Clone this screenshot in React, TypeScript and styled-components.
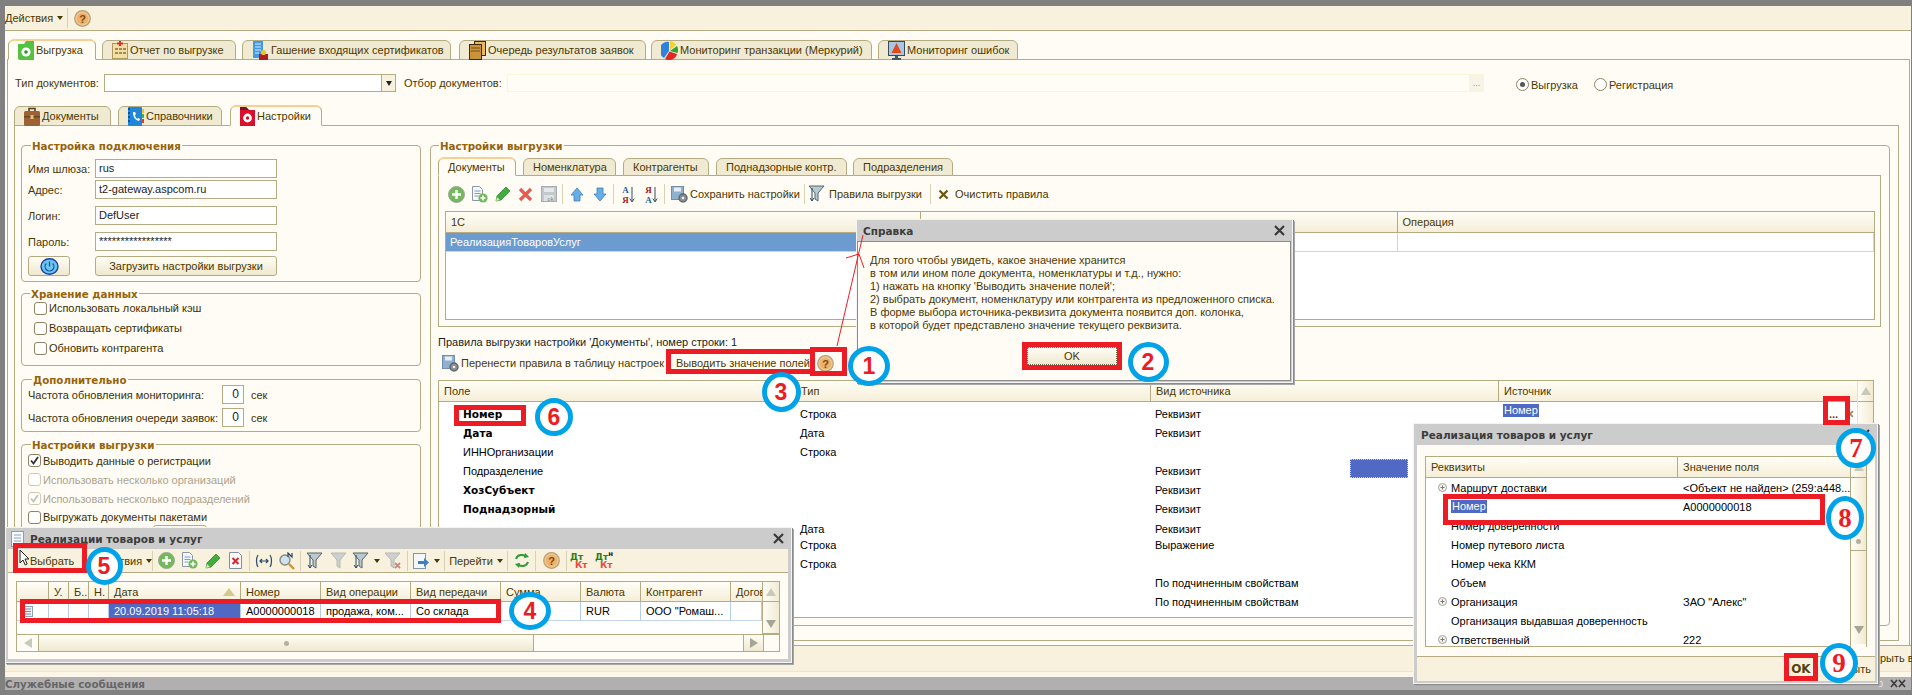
import React from 'react'
import styled, { createGlobalStyle } from 'styled-components'

const line = '#b5ab82'
const beige = '#f7f1de'
const page = '#fffcf6'
const ink = '#4a3800'
const pick = '#5069c5'

const Global = createGlobalStyle`
	html, body { margin: 0; padding: 0; background: #808080; }
	* { box-sizing: border-box; }
	svg { flex: none; }
	body { font-family: "Liberation Sans", Arial, sans-serif; font-size: 11px; color: ${ink}; }
`

/* ---------- icons ---------- */

const Help = () => (
	<svg width="17" height="17" viewBox="0 0 17 17">
		<circle cx="8.5" cy="8.5" r="7.8" fill="#f2c48a" stroke="#b5a27c" strokeWidth="1.2"/>
		<circle cx="8.5" cy="8.5" r="5.6" fill="#eeb06a"/>
		<text x="8.5" y="12.6" textAnchor="middle" fontSize="11" fontWeight="700" fontFamily="Liberation Sans" fill="#7a4a10">?</text>
	</svg>
)
const GreenFolder = () => (
	<svg width="16" height="19" viewBox="0 0 16 19">
		<path d="M0 3h6l2-3h8v19H2a2 2 0 0 1-2-2z" fill="#53c240"/>
		<circle cx="8" cy="11" r="4.6" fill="#fff"/><circle cx="8" cy="11" r="1.8" fill="#2f8f2a"/>
	</svg>
)
const Report = () => (
	<svg width="16" height="18" viewBox="0 0 16 18">
		<rect x=".5" y="2.5" width="15" height="15" fill="#f3dfa6" stroke="#b09a5c"/>
		<path d="M3 7h3v2H3zM7 7h3v2H7zM11 7h3v2h-3zM3 11h3v2H3zM7 11h3v2H7zM11 11h3v2h-3z" fill="#a08a50"/>
		<path d="M7 0h2v5H7zM5 1.5h6v2H5z" fill="#d9322c"/>
	</svg>
)
const Cert = () => (
	<svg width="17" height="19" viewBox="0 0 17 19">
		<rect x="1" y="0" width="10" height="17" fill="#3f9be8"/>
		<path d="M3 3h6M3 6h6M3 9h6M3 12h4" stroke="#d5ecff"/>
		<rect x="7" y="13" width="9" height="6" fill="#b01c1c"/>
		<rect x="9" y="9" width="5" height="5" rx="2" fill="#e5c62e"/>
	</svg>
)
const Queue = () => (
	<svg width="17" height="19" viewBox="0 0 17 19">
		<rect x="5.5" y=".5" width="11" height="14" fill="#e8b85c" stroke="#3c2a08"/>
		<rect x=".5" y="3.5" width="12" height="15" fill="#c9933c" stroke="#3c2a08"/>
		<path d="M2 7h9M2 10h9" stroke="#7a5518"/>
	</svg>
)
const Pie = () => (
	<svg width="17" height="19" viewBox="0 0 17 19">
		<path d="M8 10 L8 1 A8 8.5 0 0 0 3 17z" fill="#2f82dc"/>
		<path d="M9 9V0a8 8 0 0 1 6 4z" fill="#f3d42c"/>
		<path d="M9 10l7-5a8 8 0 0 1 .5 7z" fill="#2fa52f"/>
		<path d="M8.5 10.5l7.5 2.5A8 8 0 0 1 4 18z" fill="#e32626"/>
	</svg>
)
const Monitor = () => (
	<svg width="17" height="19" viewBox="0 0 17 19">
		<rect x=".5" y=".5" width="16" height="14" fill="#a9c7e2" stroke="#3b4a58"/>
		<path d="M8.5 2l5 10h-10z" fill="#e24a1c"/>
		<path d="M7 15h3v2H7zM4 17h9v2H4z" fill="#4a5560"/>
	</svg>
)
const Briefcase = () => (
	<svg width="16" height="19" viewBox="0 0 16 19">
		<path d="M5 4V1.5h6V4" fill="none" stroke="#5c3a1a" strokeWidth="1.6"/>
		<rect x="0" y="4" width="16" height="15" rx="1.5" fill="#9c6236"/>
		<rect x="0" y="9" width="16" height="1.5" fill="#6e4322"/>
		<rect x="6.5" y="8" width="3" height="4" fill="#e8c078"/>
	</svg>
)
const PhoneBook = () => (
	<svg width="16" height="19" viewBox="0 0 16 19">
		<rect x="0" y="0" width="14" height="19" rx="1" fill="#1f86dc"/>
		<path d="M0 2h2M0 6h2M0 10h2M0 14h2" stroke="#0b3f78" strokeWidth="1.5"/>
		<path d="M5 5c0 5 2 8 6 9l1-2-2-1-1 1c-1-1-2-3-2-4l1-1-1-2z" fill="#fff"/>
		<path d="M14 2h2v4h-2z" fill="#e8c62a"/><path d="M14 7h2v4h-2z" fill="#3fb04a"/><path d="M14 12h2v4h-2z" fill="#e23a2a"/>
	</svg>
)
const RedFolder = () => (
	<svg width="15" height="19" viewBox="0 0 15 19">
		<path d="M0 0h6l3 3h6v16H0z" fill="#d8102c"/>
		<path d="M0 0h6l3 3H0z" fill="#7a1020"/>
		<circle cx="7.5" cy="11" r="4.4" fill="#fff"/><circle cx="7.5" cy="11" r="1.7" fill="#d8102c"/>
	</svg>
)
const Add = () => (
	<svg width="17" height="17" viewBox="0 0 17 17">
		<circle cx="8.5" cy="8.5" r="8" fill="#74b85e" stroke="#9aa894"/>
		<path d="M8.5 4v9M4 8.5h9" stroke="#fff" strokeWidth="2.4"/>
	</svg>
)
const CopyDoc = () => (
	<svg width="17" height="17" viewBox="0 0 17 17">
		<path d="M1.5.5h7l3 3v11h-10z" fill="#f4f8fb" stroke="#8a98a6"/>
		<path d="M3.5 5h6M3.5 7.5h6M3.5 10h4" stroke="#7f9cc0"/>
		<circle cx="12" cy="12" r="4.6" fill="#74b85e"/>
		<path d="M12 9.5v5M9.5 12h5" stroke="#fff" strokeWidth="1.6"/>
	</svg>
)
const Pencil = () => (
	<svg width="16" height="16" viewBox="0 0 16 16">
		<path d="M1 15l1-5L11 1l4 4-9 9z" fill="#3fae3a" stroke="#2a7a28" strokeWidth=".7"/>
		<path d="M1 15l1-4 3 3z" fill="#d8e8b0"/>
	</svg>
)
const RedCross = () => (
	<svg width="15" height="15" viewBox="0 0 15 15">
		<path d="M2 2l11 11M13 2L2 13" stroke="#ea5a50" strokeWidth="3.2"/>
	</svg>
)
const DocCross = () => (
	<svg width="15" height="17" viewBox="0 0 15 17">
		<path d="M1.5.5h9l3 3v13h-12z" fill="#f8fafc" stroke="#7f8fa0"/>
		<path d="M4.5 6l6 6M10.5 6l-6 6" stroke="#d8262a" strokeWidth="2"/>
	</svg>
)
const Floppy = () => (
	<svg width="16" height="16" viewBox="0 0 16 16">
		<rect x=".5" y=".5" width="15" height="15" fill="#c3c8cc" stroke="#a7adb2"/>
		<rect x="3" y="2" width="10" height="4" fill="#e6e9eb"/>
		<rect x="3" y="9" width="10" height="6" fill="#dfe2e4"/>
		<text x="9.5" y="14.6" textAnchor="middle" fontSize="6" fontFamily="Liberation Sans" fill="#7a8288">ok</text>
	</svg>
)
const Arrow = ({ down }: { down?: boolean }) => (
	<svg width="14" height="15" viewBox="0 0 14 15">
		<path d={down ? 'M4 1h6v6h3l-6 7-6-7h3z' : 'M7 1l6 7h-3v6H4V8H1z'} fill="#66aee4" stroke="#3f7fb6" strokeWidth=".8"/>
	</svg>
)
const Sort = ({ flip }: { flip?: boolean }) => (
	<svg width="14" height="19" viewBox="0 0 14 19">
		<text x="4.5" y="8" textAnchor="middle" fontSize="9" fontFamily="Liberation Serif" fontWeight="700" fill={flip ? '#a0201c' : '#1c5c9c'}>{flip ? 'Я' : 'А'}</text>
		<text x="4.5" y="18" textAnchor="middle" fontSize="9" fontFamily="Liberation Serif" fontWeight="700" fill={flip ? '#1c5c9c' : '#a0201c'}>{flip ? 'А' : 'Я'}</text>
		<path d="M11 2v14M8.8 13.5L11 17l2.2-3.5" fill="none" stroke="#3c4a58"/>
	</svg>
)
const FloppyGear = () => (
	<svg width="17" height="17" viewBox="0 0 17 17">
		<rect x=".5" y=".5" width="12" height="13" fill="#8fb0d0" stroke="#6f8ea8"/>
		<rect x="3" y="1.5" width="7" height="4" fill="#e8eef4"/>
		<circle cx="12" cy="12" r="4" fill="#8a8f94" stroke="#60666c" strokeWidth="1.4"/>
		<circle cx="12" cy="12" r="1.3" fill="#eceff2"/>
	</svg>
)
const Funnel = ({ faded, cross }: { faded?: boolean, cross?: boolean }) => (
	<svg width="18" height="18" viewBox="0 0 18 18">
		<path d="M1 1h15l-6 7v8l-3-2V8z" fill={faded ? '#ccd0cc' : '#b9c9cf'} stroke={faded ? '#b6bab6' : '#56666e'}/>
		{!faded && <path d="M4 3v13M2 13l2 3 2-3" fill="none" stroke="#26465e"/>}
		{cross && <path d="M11 11l5 5M16 11l-5 5" stroke="#c98a80" strokeWidth="1.8"/>}
	</svg>
)
const BrownX = ({ faint }: { faint?: boolean }) => (
	<svg width={faint ? 8 : 11} height={faint ? 8 : 11} viewBox="0 0 11 11">
		<path d="M1.5 1.5l8 8M9.5 1.5l-8 8" stroke={faint ? '#9a8a50' : '#6b5510'} strokeWidth="2.2"/>
	</svg>
)
const Power = () => (
	<svg width="19" height="17" viewBox="0 0 19 17">
		<ellipse cx="9.5" cy="8.5" rx="8.5" ry="7.8" fill="#6cc4f2" stroke="#1c3fa8" strokeWidth="1.4"/>
		<path d="M6.3 5.5a4.4 4.4 0 1 0 6.4 0M9.5 3.5v5" fill="none" stroke="#0f5a96" strokeWidth="1.3"/>
	</svg>
)
const Close = () => (
	<svg width="11" height="11" viewBox="0 0 11 11">
		<path d="M1 1l9 9M10 1l-9 9" stroke="#3a3a3a" strokeWidth="2.2"/>
	</svg>
)
const DocSmall = () => (
	<svg width="13" height="16" viewBox="0 0 13 16">
		<rect x=".5" y=".5" width="12" height="15" fill="#f6f8fb" stroke="#8e9cab"/>
		<path d="M3 4h7M3 7h7M3 10h7" stroke="#93a6bc"/>
	</svg>
)
const RowDoc = () => (
	<svg width="11" height="11" viewBox="0 0 11 11">
		<rect x=".5" y=".5" width="10" height="10" fill="#eef2f8" stroke="#8ea0b8"/>
		<path d="M2 3h7M2 5.5h7M2 8h7" stroke="#7a8ea8"/>
	</svg>
)
const Pointer = () => (
	<svg width="11" height="17" viewBox="0 0 11 17">
		<path d="M1 1v13l3-3 2.2 5 2-1-2.2-5h4z" fill="#fff" stroke="#222"/>
	</svg>
)
const Expand = () => (
	<svg width="9" height="9" viewBox="0 0 9 9">
		<circle cx="4.5" cy="4.5" r="4" fill="#f4f2ea" stroke="#a0a0a0"/>
		<path d="M2.5 4.5h4M4.5 2.5v4" stroke="#777"/>
	</svg>
)
const Swap = () => (
	<svg width="18" height="14" viewBox="0 0 18 14">
		<path d="M3 1C1 4 1 10 3 13M15 1c2 3 2 9 0 12" fill="none" stroke="#2c4a68" strokeWidth="1.2"/>
		<path d="M5 7h8M7 5L5 7l2 2M11 5l2 2-2 2" fill="none" stroke="#2c4a68" strokeWidth="1.2"/>
	</svg>
)
const Find = () => (
	<svg width="18" height="18" viewBox="0 0 18 18">
		<circle cx="7" cy="8" r="5" fill="#cfe2f2" stroke="#8a8a7a" strokeWidth="1.4"/>
		<path d="M11 12l5 5" stroke="#c9963c" strokeWidth="2.4"/>
		<path d="M10 5V1l4 4V1" fill="none" stroke="#26465e" strokeWidth="1.2"/>
	</svg>
)
const Refresh = () => (
	<svg width="16" height="15" viewBox="0 0 16 15">
		<path d="M2 6a6 5.5 0 0 1 10.5-2M14 9a6 5.5 0 0 1-10.5 2" fill="none" stroke="#2f9a3a" strokeWidth="2"/>
		<path d="M11 0l4 4-5 1zM5 15l-4-4 5-1z" fill="#2f9a3a"/>
	</svg>
)
const SendIcon = () => (
	<svg width="17" height="16" viewBox="0 0 17 16">
		<rect x=".5" y=".5" width="12" height="15" fill="#f4f7fa" stroke="#8494a4"/>
		<path d="M5 8h6V5l5 4.5-5 4.5v-3H5z" fill="#3f7fc4"/>
	</svg>
)
const TrayMark = () => (
	<svg width="16" height="9" viewBox="0 0 16 9">
		<path d="M1 1l6 7M7 1L1 8M9 1l6 7M15 1L9 8" stroke="#3a3a3a" strokeWidth="1.6"/>
	</svg>
)

/* ---------- shell ---------- */

const Screen = styled.div`
	position: relative;
	width: 1912px;
	height: 695px;
	overflow: hidden;
	padding: 6px 1px 0 5px;
	background: #808080;
	display: flex;
	flex-direction: column;
`
const Toolbar = styled.div`
	flex: none;
	height: 25px;
	background: ${beige};
	border-bottom: 1px solid ${line};
	display: flex;
	align-items: center;
`
const Caret = styled.span`
	display: inline-block;
	margin-left: 4px;
	border: 3px solid transparent;
	border-top: 4px solid #4a3800;
	border-bottom: 0;
`
const TopMenu = styled.div`
	display: flex;
	align-items: center;
	width: 62px;
	height: 100%;
`
const Sep = styled.i<{ $h?: number, $m?: number }>`
	flex: none;
	width: 1px;
	height: ${p => p.$h ?? 20}px;
	margin: 0 ${p => p.$m ?? 2}px;
	background: #d8d1b4;
`
const Tool = styled.span<{ $w?: number, $start?: boolean, $pad?: number, $gap?: number }>`
	flex: none;
	display: inline-flex;
	align-items: center;
	justify-content: ${p => p.$start ? 'flex-start' : 'center'};
	width: ${p => p.$w ?? 23}px;
	padding-left: ${p => p.$pad ?? 0}px;
	gap: ${p => p.$gap ?? 0}px;
	white-space: nowrap;
`
const Work = styled.div`
	flex: none;
	height: 614px;
	padding: 8px 0 0 2px;
	background: ${page};
`
const Tabs = styled.div<{ $h: number, $mt?: number }>`
	display: flex;
	align-items: flex-end;
	height: ${p => p.$h}px;
	margin: ${p => p.$mt ?? 0}px 0 -1px 0;
	position: relative;
	z-index: 1;
`
const Tab = styled.div<{ $w: number, $on?: boolean, $ml?: number, $pad?: number }>`
	flex: none;
	width: ${p => p.$w}px;
	height: ${p => p.$on ? '100%' : 'calc(100% - 1px)'};
	margin-left: ${p => p.$ml ?? 0}px;
	padding-left: ${p => p.$pad ?? 9}px;
	display: flex;
	align-items: center;
	gap: 2px;
	white-space: nowrap;
	border: 1px solid ${line};
	border-radius: 6px 6px 0 0;
	background: ${p => p.$on ? page : '#f1ead3'};
	${p => p.$on ? `border-bottom-color: ${page}; border-top: 2px solid #f7cf92;` : `border-bottom-color: ${line};`}
`
const MainPanel = styled.div`
	height: 587px;
	width: 1903px;
	border: 1px solid ${line};
	padding: 14px 9px 4px 6px;
`
const FilterRow = styled.div`
	display: flex;
	align-items: center;
	height: 18px;
	margin-left: 1px;
`
const Label = styled.span<{ $w?: number, $ml?: number }>`
	flex: none;
	display: inline-block;
	width: ${p => p.$w ? `${p.$w}px` : 'auto'};
	margin-left: ${p => p.$ml ?? 0}px;
	white-space: nowrap;
`
const Combo = styled.div<{ $w: number, $soft?: boolean }>`
	flex: none;
	width: ${p => p.$w}px;
	height: 18px;
	display: flex;
	justify-content: flex-end;
	background: ${p => p.$soft ? '#fffdf5' : '#fff'};
	border: 1px solid ${p => p.$soft ? '#fbf6d8' : line};
`
const ComboBtn = styled.div<{ $soft?: boolean }>`
	width: 14px;
	display: grid;
	place-items: center;
	background: ${p => p.$soft ? '#f7f3e6' : beige};
	border-left: 1px solid ${p => p.$soft ? '#f7f3e6' : line};
	color: #9a9278;
	font-size: 9px;
	line-height: 8px;
`
const DownMark = styled.span`
	border: 3.5px solid transparent;
	border-top: 5px solid #222;
	border-bottom: 0;
`
const Radio = styled.span<{ $on?: boolean, $ml?: number }>`
	flex: none;
	width: 13px;
	height: 13px;
	margin: 3px 2px 0 ${p => p.$ml ?? 0}px;
	border: 1px solid #8c8462;
	border-radius: 50%;
	background: #fff;
	display: grid;
	place-items: center;
	&::after {
		content: '';
		width: 5px;
		height: 5px;
		border-radius: 50%;
		background: ${p => p.$on ? '#555' : 'transparent'};
	}
`
const RadioText = styled.span`
	margin-top: 3px;
	white-space: nowrap;
`
const SettingsPanel = styled.div`
	height: 516px;
	width: 1885px;
	border: 1px solid ${line};
	padding: 19px 8px 14px 6px;
	display: grid;
	grid-template-columns: 400px 1fr;
	column-gap: 9px;
`
const LeftCol = styled.div`
	display: flex;
	flex-direction: column;
`
const Group = styled.div<{ $h: number, $mt?: number }>`
	position: relative;
	flex: none;
	height: ${p => p.$h}px;
	margin-top: ${p => p.$mt ?? 0}px;
	border: 1px solid ${line};
	border-radius: 4px;
`
const Legend = styled.div<{ $x: number }>`
	position: absolute;
	top: -7px;
	left: ${p => p.$x}px;
	padding: 0 1px;
	background: ${page};
	font: 700 10.3px/14px "DejaVu Sans", sans-serif;
	color: #96640a;
	white-space: nowrap;
`
const FieldGrid = styled.div`
	padding: 13px 0 0 6px;
	display: grid;
	grid-template-columns: 67px 182px;
	row-gap: 2px;
	align-items: center;
`
const Field = styled.div<{ $mt?: number }>`
	height: 19px;
	margin-top: ${p => p.$mt ?? 0}px;
	padding-left: 3px;
	background: #fff;
	border: 1px solid ${line};
	line-height: 17px;
	color: #222;
	white-space: nowrap;
`
const FieldLabel = styled.div<{ $mt?: number }>`
	margin-top: ${p => p.$mt ?? 0}px;
	white-space: nowrap;
`
const Btn = styled.div<{ $w?: number, $mt?: number, $ml?: number }>`
	height: 20px;
	width: ${p => p.$w ? `${p.$w}px` : 'auto'};
	margin: ${p => p.$mt ?? 0}px 0 0 ${p => p.$ml ?? 0}px;
	display: grid;
	place-items: center;
	border: 1px solid ${line};
	border-radius: 3px;
	background: linear-gradient(#fffdf4, #efe8cf);
	white-space: nowrap;
`
const CheckRow = styled.div<{ $h?: number, $ml?: number, $off?: boolean }>`
	display: flex;
	align-items: center;
	height: ${p => p.$h ?? 20}px;
	margin-left: ${p => p.$ml ?? 6}px;
	color: ${p => p.$off ? '#aaa38c' : '#3c3000'};
	white-space: nowrap;
`
const Box = styled.span<{ $off?: boolean }>`
	flex: none;
	width: 13px;
	height: 13px;
	margin-right: 2px;
	border: 1px solid ${p => p.$off ? '#cfc9b2' : '#8c8462'};
	border-radius: 3px;
	background: #fff;
	display: grid;
	place-items: center;
`
const Check = ({ off }: { off?: boolean }) => (
	<svg width="9" height="9" viewBox="0 0 9 9"><path d="M1 4.5l2.5 3L8 1" fill="none" stroke={off ? '#c2bfb4' : '#333'} strokeWidth="1.8"/></svg>
)
const Checks = styled.div<{ $pt: number }>`
	padding-top: ${p => p.$pt}px;
`
const SecRow = styled.div<{ $h: number }>`
	display: flex;
	align-items: center;
	height: ${p => p.$h}px;
	margin-left: 6px;
	color: #3c3000;
`
const Num = styled.div`
	flex: none;
	width: 22px;
	height: 19px;
	margin: 0 7px 0 0;
	padding-right: 4px;
	text-align: right;
	background: #fff;
	border: 1px solid ${line};
	font-size: 12px;
	line-height: 16px;
	color: #222;
`

/* ---------- right side ---------- */

const RightGroupBody = styled.div`
	padding: 11px 0 0 7px;
`
const TabBody = styled.div`
	width: 1443px;
	height: 152px;
	border: 1px solid ${line};
	padding: 0 0 0 6px;
`
const SmallBar = styled.div`
	display: flex;
	align-items: center;
	height: 20px;
	margin: 8px 0 7px;
`
const GridHead = styled.div<{ $cols: string, $h?: number }>`
	display: grid;
	grid-template-columns: ${p => p.$cols};
	height: ${p => p.$h ?? 21}px;
	background: linear-gradient(#fffdf6, #f5eed8);
	border-bottom: 1px solid ${line};
`
const HeadCell = styled.div<{ $last?: boolean, $pad?: number }>`
	display: flex;
	align-items: center;
	justify-content: space-between;
	padding: 0 ${p => p.$pad ?? 5}px;
	white-space: nowrap;
	overflow: hidden;
	border-right: ${p => p.$last ? '0' : `1px solid ${line}`};
`
const SetTable = styled.div`
	width: 1430px;
	height: 109px;
	border: 1px solid ${line};
	background: #fff;
`
const SelectedRow = styled.div`
	display: grid;
	grid-template-columns: 475px 1fr 1fr;
	height: 19px;
	border-bottom: 1px solid #c4d6ee;
`
const SelCell = styled.div<{ $sel?: boolean }>`
	padding-left: 4px;
	line-height: 18px;
	color: ${p => p.$sel ? '#fff' : '#000'};
	background: ${p => p.$sel ? '#6c9bcf' : '#fff'};
	border-right: 1px solid #c4d6ee;
`
const RulesCaption = styled.div`
	height: 21px;
	margin-top: 4px;
	display: flex;
	align-items: center;
	color: #1c1c1c;
`
const RulesBar = styled.div`
	height: 22px;
	margin-bottom: 6px;
	display: flex;
	align-items: center;
`
const RuleTable = styled.div`
	position: relative;
	width: 1436px;
	height: 238px;
	border: 1px solid ${line};
	background: #fff;
	display: grid;
	grid-template-columns: 1fr 16px;
	overflow: hidden;
`
const RuleScroll = styled.div`
	display: flex;
	flex-direction: column;
	border-left: 1px solid #e8e2c8;
	background: linear-gradient(90deg, #fffdf5, #f3ecd4);
`
const ScrollBtn = styled.div<{ $h?: number, $line?: boolean }>`
	flex: none;
	height: ${p => p.$h ?? 21}px;
	display: grid;
	place-items: center;
	border-bottom: ${p => p.$line ? `1px solid ${line}` : '0'};
	background: linear-gradient(90deg, #fffdf5, #f1ead2);
`
const Tri = styled.span<{ $dir: 'up' | 'down' | 'left' | 'right' }>`
	width: 0;
	height: 0;
	border: 5px solid transparent;
	${p => p.$dir === 'up' && 'border-bottom: 8px solid #c9c9b8; border-top: 0;'}
	${p => p.$dir === 'down' && 'border-top: 8px solid #a5a596; border-bottom: 0;'}
	${p => p.$dir === 'left' && 'border-right: 8px solid #c9c9b8; border-left: 0;'}
	${p => p.$dir === 'right' && 'border-left: 8px solid #a5a596; border-right: 0;'}
`
const RuleBody = styled.div`
	padding-top: 2px;
	height: 216px;
	overflow: hidden;
`
const RuleRow = styled.div<{ $h?: number }>`
	display: grid;
	grid-template-columns: 357px 355px 348px 1fr;
	height: ${p => p.$h ?? 19}px;
	align-items: center;
	color: #000;
`
const Name = styled.div<{ $bold?: boolean, $pad?: number, $drop?: number }>`
	margin-top: ${p => p.$drop ?? 0}px;
	padding-left: ${p => p.$pad ?? 24}px;
	font: ${p => p.$bold ? '700 10.5px "DejaVu Sans", sans-serif' : '11px "Liberation Sans", sans-serif'};
	white-space: nowrap;
`
const Plain = styled.div<{ $pad?: number }>`
	padding-left: ${p => p.$pad ?? 4}px;
	white-space: nowrap;
`
const SourceCell = styled.div`
	align-self: stretch;
	display: flex;
	justify-content: space-between;
	padding-left: 4px;
`
const Chip = styled.span`
	align-self: flex-start;
	height: 13px;
	line-height: 13px;
	padding: 0 1px;
	background: ${pick};
	color: #fff;
`
const CellBtns = styled.div`
	display: flex;
	width: 28px;
	align-items: center;
	gap: 8px;
	color: #5a4a10;
	font-weight: 700;
`

/* ---------- floating windows ---------- */

const Win = styled.div<{ $x: number, $y: number, $w: number, $h: number }>`
	position: absolute;
	left: ${p => p.$x}px;
	top: ${p => p.$y}px;
	width: ${p => p.$w}px;
	height: ${p => p.$h}px;
	background: #cccccc;
	border: 1px solid #f4f4f4;
	box-shadow: 1px 1px 0 #8a8a8a, 2px 2px 0 #a8a8a8;
	display: flex;
	flex-direction: column;
	z-index: 5;
`
const WinTitle = styled.div<{ $h: number, $pad: number }>`
	flex: none;
	height: ${p => p.$h}px;
	display: flex;
	align-items: center;
	gap: 6px;
	padding: 0 7px 0 ${p => p.$pad}px;
	font: 700 10.5px "DejaVu Sans", sans-serif;
	color: #3c3c3c;
	white-space: nowrap;
`
const Spring = styled.span`
	flex: 1;
`
const HelpBody = styled.div`
	flex: 1;
	margin: 0 1px 1px 0;
	background: ${page};
	border: 1px solid #8a8a8a;
	padding: 12px 0 0 12px;
	display: flex;
	flex-direction: column;
`
const HelpText = styled.div`
	line-height: 13px;
	white-space: nowrap;
	color: #4a3800;
`
const OkBtn = styled.div`
	width: 90px;
	height: 18px;
	margin: 15px 0 0 157px;
	display: grid;
	place-items: center;
	border: 1px dotted #6b6b50;
	background: linear-gradient(#fffdf4, #efe8cf);
`
const ListBody = styled.div`
	flex: 1;
	margin: 0 3px 3px 2px;
	background: ${page};
	display: flex;
	flex-direction: column;
`
const ListBar = styled.div`
	flex: none;
	height: 24px;
	display: flex;
	align-items: center;
	background: ${beige};
	border-bottom: 1px solid ${line};
`
const ListTable = styled.div`
	width: 764px;
	height: 71px;
	margin: 8px 0 0 8px;
	border: 1px solid ${line};
	background: #fff;
	display: grid;
	grid-template-columns: 1fr 17px;
	grid-template-rows: 1fr 17px;
`
const ListMain = styled.div`
	overflow: hidden;
`
const ListRow = styled.div<{ $cols: string }>`
	display: grid;
	grid-template-columns: ${p => p.$cols};
	height: 19px;
	border-bottom: 1px solid #c4d6ee;
	color: #000;
`
const ListCell = styled.div<{ $sel?: boolean }>`
	display: flex;
	align-items: center;
	padding: 0 5px;
	border-right: 1px solid #b4cbe9;
	white-space: nowrap;
	overflow: hidden;
	color: ${p => p.$sel ? '#fff' : '#000'};
	background: ${p => p.$sel ? pick : 'transparent'};
`
const HBar = styled.div`
	grid-column: 1 / 3;
	display: grid;
	grid-template-columns: 22px 495px 210px 20px 1fr;
	border-top: 1px solid ${line};
	background: ${page};
`
const HPart = styled.div<{ $thumb?: boolean }>`
	display: grid;
	place-items: center;
	border-right: 1px solid ${line};
	background: ${p => p.$thumb ? 'linear-gradient(#fffdf5, #efe8cf)' : 'transparent'};
`
const ThumbDot = styled.span`
	width: 5px;
	height: 5px;
	border-radius: 50%;
	background: #b5b09c;
`
const SortMark = styled.span`
	width: 0;
	height: 0;
	border: 6px solid transparent;
	border-top: 0;
	border-bottom: 8px solid #d8c890;
`
const VBar = styled.div`
	display: flex;
	flex-direction: column;
	border-left: 1px solid ${line};
	background: ${page};
`
const Dk = styled.span<{ $w?: number }>`
	display: inline-block;
	width: ${p => p.$w ?? 24}px;
	font: 700 9px/8px "DejaVu Sans", sans-serif;
	color: #2f7d14;
`
const Kt = styled.span`
	display: block;
	margin-left: 5px;
	color: #ef4a3c;
`
const Sup = styled.sup`
	font-size: 7px;
	line-height: 0;
	color: #222;
`
const PickBody = styled.div`
	flex: 1;
	margin: 0 2px 2px 3px;
	background: ${page};
	padding: 11px 0 0 8px;
	display: flex;
	flex-direction: column;
`
const PickTable = styled.div`
	width: 442px;
	height: 191px;
	border: 1px solid ${line};
	background: #fff;
	display: grid;
	grid-template-columns: 1fr 16px;
`
const PickRow = styled.div`
	display: grid;
	grid-template-columns: 252px 1fr;
	height: 19px;
	align-items: center;
	color: #000;
`
const PickName = styled.div`
	display: flex;
	align-items: center;
	padding-left: 7px;
	white-space: nowrap;
`
const ExpandSlot = styled.span`
	flex: none;
	display: grid;
	place-items: center;
	width: 18px;
	height: 14px;
`
const PickFoot = styled.div`
	flex: none;
	height: 25px;
	margin: 9px 0 0 -8px;
	background: ${beige};
	border-top: 1px solid ${line};
	display: flex;
	align-items: center;
	justify-content: flex-end;
	padding-right: 4px;
	gap: 18px;
`
const FootOk = styled.span`
	font: 700 12px "DejaVu Sans", sans-serif;
	color: #5a4300;
`

/* ---------- bottom ---------- */

const BottomBand = styled.div`
	flex: none;
	height: 32px;
	background: ${beige};
	border-top: 1px solid ${line};
	display: flex;
	flex-direction: column;
	justify-content: flex-end;
`
const BottomLight = styled.div`
	height: 6px;
	border-top: 1px solid #e8e4d8;
	background: #fbf6e8;
`
const Status = styled.div`
	flex: none;
	height: 13px;
	display: flex;
	align-items: center;
	padding-right: 5px;
	background: #b1afb0;
	font: 700 10.3px "DejaVu Sans", sans-serif;
	color: #666;
	white-space: nowrap;
`
const TrayZero = styled.span`
	margin-right: 7px;
	font: 9px "Liberation Sans", sans-serif;
	color: #eee;
`
const BehindText = styled.span<{ $x: number, $y: number }>`
	position: absolute;
	left: ${p => p.$x}px;
	top: ${p => p.$y}px;
	line-height: 14px;
	white-space: nowrap;
`

/* ---------- annotations ---------- */

const RedBox = styled.div<{ $x: number, $y: number, $w: number, $h: number }>`
	position: absolute;
	left: ${p => p.$x}px;
	top: ${p => p.$y}px;
	width: ${p => p.$w}px;
	height: ${p => p.$h}px;
	border: 5px solid #ed1c24;
	z-index: 8;
`
const Badge = styled.div<{ $x: number, $y: number, $w: number, $h: number, $serif?: boolean }>`
	position: absolute;
	left: ${p => p.$x - p.$w / 2}px;
	top: ${p => p.$y - p.$h / 2}px;
	width: ${p => p.$w}px;
	height: ${p => p.$h}px;
	display: grid;
	place-items: center;
	border: 5px solid #00a2e8;
	border-radius: 50%;
	background: #fff;
	color: #ed1c24;
	font: 700 ${p => p.$serif ? '27px "Liberation Serif"' : '23px "Liberation Sans"'}, sans-serif;
	z-index: 9;
`
const PointerLine = styled.svg`
	position: absolute;
	left: 0;
	top: 0;
	width: 1912px;
	height: 695px;
	pointer-events: none;
	z-index: 8;
`
const LeftoverCell = styled.div`
	position: absolute;
	left: 1350px;
	top: 459px;
	width: 58px;
	height: 19px;
	background: ${pick};
	border: 1px dotted #c4ccec;
	z-index: 2;
`
const CursorSlot = styled.div`
	position: absolute;
	left: 19px;
	top: 549px;
	z-index: 9;
`

const mainTabs = [
	{ t: 'Выгрузка', w: 88, ml: 1, on: true, i: <GreenFolder/> },
	{ t: 'Отчет по выгрузке', w: 134, ml: 6, i: <Report/> },
	{ t: 'Гашение входящих сертификатов', w: 209, ml: 6, i: <Cert/> },
	{ t: 'Очередь результатов заявок', w: 187, ml: 8, i: <Queue/> },
	{ t: 'Мониторинг транзакции (Меркурий)', w: 221, ml: 5, i: <Pie/> },
	{ t: 'Мониторинг ошибок', w: 140, ml: 6, i: <Monitor/> },
]
const sideTabs = [
	{ t: 'Документы', w: 97, ml: 0, i: <Briefcase/> },
	{ t: 'Справочники', w: 104, ml: 7, i: <PhoneBook/> },
	{ t: 'Настройки', w: 92, ml: 8, on: true, i: <RedFolder/> },
]
const exportTabs = [
	{ t: 'Документы', w: 78, ml: 0, on: true },
	{ t: 'Номенклатура', w: 93, ml: 7 },
	{ t: 'Контрагенты', w: 86, ml: 7 },
	{ t: 'Поднадзорные контр.', w: 131, ml: 7 },
	{ t: 'Подразделения', w: 100, ml: 6 },
]
const ruleRows: { n: string, b?: boolean, p?: number, t?: string, k?: string, h?: number, d?: number }[] = [
	{ n: 'Номер', b: true, t: 'Строка', k: 'Реквизит' },
	{ n: 'Дата', b: true, t: 'Дата', k: 'Реквизит' },
	{ n: 'ИННОрганизации', t: 'Строка' },
	{ n: 'Подразделение', k: 'Реквизит' },
	{ n: 'ХозСубъект', b: true, k: 'Реквизит' },
	{ n: 'Поднадзорный', b: true, k: 'Реквизит' },
	{ n: 'КПП', b: true, p: 46, d: 10, t: 'Дата', k: 'Реквизит', h: 17 },
	{ n: '', t: 'Строка', k: 'Выражение' },
	{ n: '', t: 'Строка' },
	{ n: '', k: 'По подчиненным свойствам' },
	{ n: '', k: 'По подчиненным свойствам' },
	{ n: '', k: 'Реквизит' },
]
const listCols = '32px 20px 20px 20px 132px 80px 90px 90px 80px 60px 90px 1fr'
const pickRows: { n: string, v?: string, plus?: boolean, sel?: boolean }[] = [
	{ n: 'Маршрут доставки', v: '<Объект не найден> (259:a448...', plus: true },
	{ n: 'Номер', v: 'А0000000018', sel: true },
	{ n: 'Номер доверенности' },
	{ n: 'Номер путевого листа' },
	{ n: 'Номер чека ККМ' },
	{ n: 'Объем' },
	{ n: 'Организация', v: 'ЗАО "Алекс"', plus: true },
	{ n: 'Организация выдавшая доверенность' },
	{ n: 'Ответственный', v: '222', plus: true },
]

export default function App() {
	return (
		<Screen>
			<Global/>

			<Toolbar>
				<TopMenu>Действия<Caret/></TopMenu>
				<Sep $m={0}/>
				<Tool $w={29}><Help/></Tool>
			</Toolbar>

			<Work>
				<Tabs $h={21}>
					{mainTabs.map(t => (
						<Tab key={t.t} $w={t.w} $ml={t.ml} $on={t.on}>{t.i}{t.t}</Tab>
					))}
				</Tabs>
				<MainPanel>
					<FilterRow>
						<Label $w={89}>Тип документов:</Label>
						<Combo $w={292}><ComboBtn><DownMark/></ComboBtn></Combo>
						<Label $w={103} $ml={8}>Отбор документов:</Label>
						<Combo $w={977} $soft><ComboBtn $soft>...</ComboBtn></Combo>
						<Radio $on $ml={32}/><RadioText>Выгрузка</RadioText>
						<Radio $ml={16}/><RadioText>Регистрация</RadioText>
					</FilterRow>

					<Tabs $h={21} $mt={13}>
						{sideTabs.map(t => (
							<Tab key={t.t} $w={t.w} $ml={t.ml} $on={t.on}>{t.i}{t.t}</Tab>
						))}
					</Tabs>

					<SettingsPanel>
						<LeftCol>
							<Group $h={137}>
								<Legend $x={9}>Настройка подключения</Legend>
								<FieldGrid>
									<FieldLabel>Имя шлюза:</FieldLabel><Field>rus</Field>
									<FieldLabel>Адрес:</FieldLabel><Field>t2-gateway.aspcom.ru</Field>
									<FieldLabel $mt={5}>Логин:</FieldLabel><Field $mt={5}>DefUser</Field>
									<FieldLabel $mt={5}>Пароль:</FieldLabel><Field $mt={5}>*****************</Field>
									<Btn $w={42} $mt={3}><Power/></Btn><Btn $mt={3}>Загрузить настройки выгрузки</Btn>
								</FieldGrid>
							</Group>
							<Group $h={73} $mt={11}>
								<Legend $x={8}>Хранение данных</Legend>
								<Checks $pt={4}>
									<CheckRow $ml={12}><Box/>Использовать локальный кэш</CheckRow>
									<CheckRow $ml={12}><Box/>Возвращать сертификаты</CheckRow>
									<CheckRow $ml={12}><Box/>Обновить контрагента</CheckRow>
								</Checks>
							</Group>
							<Group $h={53} $mt={13}>
								<Legend $x={10}>Дополнительно</Legend>
								<Checks $pt={3}>
									<SecRow $h={23}><Label $w={194}>Частота обновления мониторинга:</Label><Num>0</Num>сек</SecRow>
									<SecRow $h={23}><Label $w={194}>Частота обновления очереди заявок:</Label><Num>0</Num>сек</SecRow>
								</Checks>
							</Group>
							<Group $h={182} $mt={12}>
								<Legend $x={9}>Настройки выгрузки</Legend>
								<Checks $pt={6}>
									<CheckRow $h={19}><Box><Check/></Box>Выводить данные о регистрации</CheckRow>
									<CheckRow $h={19} $off><Box $off/>Использовать несколько организаций</CheckRow>
									<CheckRow $h={19} $off><Box $off><Check off/></Box>Использовать несколько подразделений</CheckRow>
									<CheckRow $h={18}><Box/>Выгружать документы пакетами</CheckRow>
									<Btn $w={54} $ml={131} $mt={-1}/>
								</Checks>
							</Group>
						</LeftCol>

						<Group $h={481}>
							<Legend $x={8}>Настройки выгрузки</Legend>
							<RightGroupBody>
								<Tabs $h={19}>
									{exportTabs.map(t => (
										<Tab key={t.t} $w={t.w} $ml={t.ml} $on={t.on}>{t.t}</Tab>
									))}
								</Tabs>
								<TabBody>
									<SmallBar>
										<Tool><Add/></Tool><Tool><CopyDoc/></Tool><Tool><Pencil/></Tool><Tool><RedCross/></Tool><Tool><Floppy/></Tool>
										<Sep/>
										<Tool><Arrow/></Tool><Tool><Arrow down/></Tool>
										<Sep/>
										<Tool><Sort/></Tool><Tool><Sort flip/></Tool>
										<Sep/>
										<Tool $w={135} $start $pad={4} $gap={2}><FloppyGear/>Сохранить настройки</Tool>
										<Sep/>
										<Tool $w={121} $start $pad={1} $gap={3}><Funnel/>Правила выгрузки</Tool>
										<Sep/>
										<Tool $w={120} $start $pad={5} $gap={6}><BrownX/>Очистить правила</Tool>
									</SmallBar>
									<SetTable>
										<GridHead $cols="475px 1fr 1fr">
											<HeadCell>1С</HeadCell>
											<HeadCell>...</HeadCell>
											<HeadCell $last>Операция</HeadCell>
										</GridHead>
										<SelectedRow>
											<SelCell $sel>РеализацияТоваровУслуг</SelCell>
											<SelCell/>
											<SelCell/>
										</SelectedRow>
									</SetTable>
								</TabBody>

								<RulesCaption>Правила выгрузки настройки 'Документы', номер строки: 1</RulesCaption>
								<RulesBar>
									<Tool $w={225} $start $pad={4} $gap={2}><FloppyGear/>Перенести правила в таблицу настроек</Tool>
									<Tool $w={147} $start $pad={13}>Выводить значение полей</Tool>
									<Tool $w={30}><Help/></Tool>
								</RulesBar>

								<RuleTable>
									<div>
										<GridHead $cols="357px 355px 348px 1fr">
											<HeadCell $last>Поле</HeadCell>
											<HeadCell>Тип</HeadCell>
											<HeadCell>Вид источника</HeadCell>
											<HeadCell $last>Источник</HeadCell>
										</GridHead>
										<RuleBody>
											{ruleRows.map((r, i) => (
												<RuleRow key={i} $h={r.h}>
													<Name $bold={r.b} $pad={r.p} $drop={r.d}>{r.n}</Name>
													<Plain>{r.t}</Plain>
													<Plain>{r.k}</Plain>
													{i === 0 ? (
														<SourceCell>
															<Chip>Номер</Chip>
															<CellBtns>...<BrownX faint/></CellBtns>
														</SourceCell>
													) : <span/>}
												</RuleRow>
											))}
										</RuleBody>
									</div>
									<RuleScroll>
										<ScrollBtn $line><Tri $dir="up"/></ScrollBtn>
									</RuleScroll>
								</RuleTable>
							</RightGroupBody>
						</Group>
					</SettingsPanel>
				</MainPanel>
			</Work>

			<BottomBand><BottomLight/></BottomBand>
			<Status>Служебные сообщения<Spring/><TrayZero>0</TrayZero><TrayMark/></Status>

			<BehindText $x={1880} $y={651}>рыть в</BehindText>

			<LeftoverCell/>

			{/* окно справки */}
			<Win $x={856} $y={219} $w={437} $h={164}>
				<WinTitle $h={21} $pad={6}>Справка<Spring/><Close/></WinTitle>
				<HelpBody>
					<HelpText>Для того чтобы увидеть, какое значение хранится</HelpText>
					<HelpText>в том или ином поле документа, номенклатуры и т.д., нужно:</HelpText>
					<HelpText>1) нажать на кнопку 'Выводить значение полей';</HelpText>
					<HelpText>2) выбрать документ, номенклатуру или контрагента из предложенного списка.</HelpText>
					<HelpText>В форме выбора источника-реквизита документа появится доп. колонка,</HelpText>
					<HelpText>в которой будет представлено значение текущего реквизита.</HelpText>
					<OkBtn>OK</OkBtn>
				</HelpBody>
			</Win>

			{/* список документов */}
			<Win $x={5} $y={527} $w={787} $h={136}>
				<WinTitle $h={21} $pad={5}><DocSmall/>Реализации товаров и услуг<Spring/><Close/></WinTitle>
				<ListBody>
					<ListBar>
						<Tool $w={73} $start $pad={22}>Выбрать</Tool>
						<Sep/>
						<Tool $w={64} $start $pad={8}>Действия<Caret/></Tool>
						<Sep/>
						<Tool><Add/></Tool><Tool><CopyDoc/></Tool><Tool><Pencil/></Tool><Tool><DocCross/></Tool>
						<Sep/>
						<Tool><Swap/></Tool><Tool><Find/></Tool>
						<Sep/>
						<Tool $w={24}><Funnel/></Tool><Tool $w={24}><Funnel faded/></Tool><Tool $w={30}><Funnel/><Caret/></Tool><Tool $w={24}><Funnel faded cross/></Tool>
						<Sep/>
						<Tool $w={32}><SendIcon/><Caret/></Tool>
						<Sep/>
						<Tool $w={58}>Перейти<Caret/></Tool>
						<Sep/>
						<Tool $w={23}><Refresh/></Tool>
						<Sep/>
						<Tool $w={26}><Help/></Tool>
						<Sep/>
						<Tool $w={26}><Dk>Дт<Kt>Кт</Kt></Dk></Tool>
						<Tool $w={24}><Dk>Дт<Sup>н</Sup><Kt>Кт</Kt></Dk></Tool>
					</ListBar>
					<ListTable>
						<ListMain>
							<GridHead $cols={listCols} $h={20}>
								<HeadCell/><HeadCell>У.</HeadCell><HeadCell>Б..</HeadCell><HeadCell>Н.</HeadCell>
								<HeadCell>Дата<SortMark/></HeadCell>
								<HeadCell>Номер</HeadCell><HeadCell>Вид операции</HeadCell><HeadCell>Вид передачи</HeadCell>
								<HeadCell>Сумма</HeadCell><HeadCell>Валюта</HeadCell><HeadCell>Контрагент</HeadCell>
								<HeadCell $last>Договор</HeadCell>
							</GridHead>
							<ListRow $cols={listCols}>
								<ListCell><RowDoc/></ListCell><ListCell/><ListCell/><ListCell/>
								<ListCell $sel>20.09.2019 11:05:18</ListCell>
								<ListCell>А0000000018</ListCell>
								<ListCell>продажа, ком...</ListCell>
								<ListCell>Со склада</ListCell>
								<ListCell/>
								<ListCell>RUR</ListCell>
								<ListCell>ООО "Ромаш...</ListCell>
								<ListCell/>
							</ListRow>
						</ListMain>
						<VBar>
							<ScrollBtn $h={20} $line><Tri $dir="up"/></ScrollBtn>
							<ScrollBtn $h={12}/>
							<ScrollBtn $h={20} $line><Tri $dir="down"/></ScrollBtn>
						</VBar>
						<HBar>
							<HPart><Tri $dir="left"/></HPart>
							<HPart $thumb><ThumbDot/></HPart>
							<HPart/>
							<HPart $thumb><Tri $dir="right"/></HPart>
							<span/>
						</HBar>
					</ListTable>
				</ListBody>
			</Win>

			{/* выбор реквизита */}
			<Win $x={1413} $y={423} $w={465} $h={261}>
				<WinTitle $h={21} $pad={7}>Реализация товаров и услуг<Spring/><Close/></WinTitle>
				<PickBody>
					<PickTable>
						<div>
							<GridHead $cols="252px 1fr">
								<HeadCell>Реквизиты</HeadCell>
								<HeadCell $last>Значение поля</HeadCell>
							</GridHead>
							{pickRows.map(r => (
								<PickRow key={r.n}>
									<PickName>
										<ExpandSlot>{r.plus && <Expand/>}</ExpandSlot>
										{r.sel ? <Chip>{r.n}</Chip> : r.n}
									</PickName>
									<Plain $pad={5}>{r.v}</Plain>
								</PickRow>
							))}
						</div>
						<VBar>
							<ScrollBtn $line><Tri $dir="up"/></ScrollBtn>
							<ScrollBtn $h={55}/>
							<ScrollBtn $h={18} $line><ThumbDot/></ScrollBtn>
							<ScrollBtn $h={65}/>
							<ScrollBtn $h={28}><Tri $dir="down"/></ScrollBtn>
						</VBar>
					</PickTable>
					<PickFoot><FootOk>OK</FootOk><span>Закрыть</span></PickFoot>
				</PickBody>
			</Win>

			<CursorSlot><Pointer/></CursorSlot>

			<PointerLine viewBox="0 0 1912 695">
				<path d="M837 346L863 235M846 258l13-4 5 14" fill="none" stroke="#ed1c24"/>
			</PointerLine>

			<RedBox $x={666} $y={349} $w={149} $h={25}/>
			<RedBox $x={810} $y={347} $w={37} $h={29}/>
			<RedBox $x={1022} $y={342} $w={100} $h={28}/>
			<RedBox $x={20} $y={599} $w={481} $h={24}/>
			<RedBox $x={13} $y={543} $w={74} $h={30}/>
			<RedBox $x={454} $y={405} $w={72} $h={21}/>
			<RedBox $x={1823} $y={396} $w={27} $h={29}/>
			<RedBox $x={1443} $y={494} $w={382} $h={31}/>
			<RedBox $x={1784} $y={653} $w={34} $h={28}/>

			<Badge $x={869} $y={366} $w={42} $h={40}>1</Badge>
			<Badge $x={1148} $y={362} $w={41} $h={40}>2</Badge>
			<Badge $x={781} $y={392} $w={39} $h={40}>3</Badge>
			<Badge $x={530} $y={611} $w={42} $h={38}>4</Badge>
			<Badge $x={104} $y={566} $w={37} $h={38}>5</Badge>
			<Badge $x={554} $y={417} $w={38} $h={38}>6</Badge>
			<Badge $x={1856} $y={448} $w={40} $h={40} $serif>7</Badge>
			<Badge $x={1845} $y={518} $w={38} $h={44} $serif>8</Badge>
			<Badge $x={1839} $y={663} $w={38} $h={40} $serif>9</Badge>
		</Screen>
	)
}
